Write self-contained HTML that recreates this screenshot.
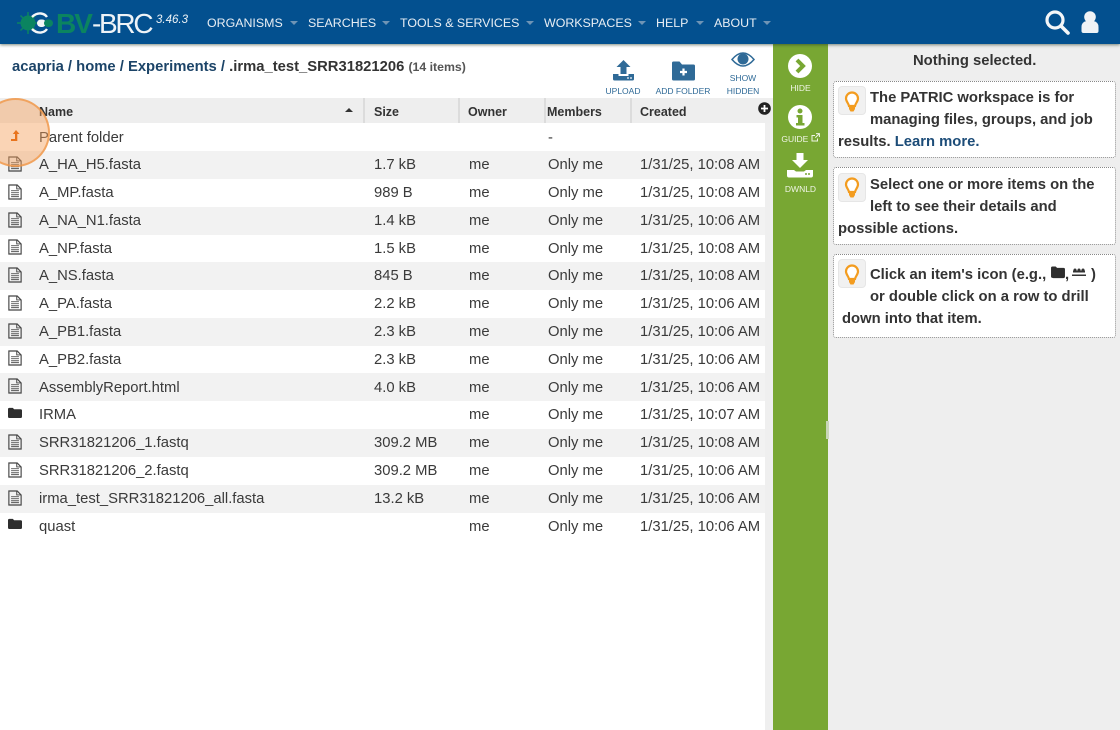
<!DOCTYPE html>
<html><head><meta charset="utf-8"><style>
html,body{margin:0;padding:0;width:1120px;height:730px;overflow:hidden;background:#fff}
body{font-family:"Liberation Sans",sans-serif;position:relative;color:#333}
.a{position:absolute;white-space:nowrap}
#top{position:absolute;left:0;top:0;width:1120px;height:44px;background:#03508f;box-shadow:0 1px 3px rgba(40,60,40,.6);z-index:3}
.nav{position:absolute;top:15px;font-size:12.4px;line-height:16px;color:#e8eef4;white-space:nowrap}
.car{position:absolute;top:21px;width:0;height:0;border:4px solid transparent;border-top:4px solid #6f94b5;border-bottom:0}
.row{position:absolute;left:0;width:765px;height:28px;font-size:14.8px;line-height:28px;color:#3a3a3a}
.row span{position:absolute;top:0;white-space:nowrap}
.row.d span{top:1px}
.row svg{position:absolute;left:8px;top:5px}
.s{background:#f2f2f2}
.h{position:absolute;top:104px;font-size:12.5px;font-weight:bold;line-height:16px;color:#333}
.sep{position:absolute;top:98px;width:2px;height:25px;background:#dcdcdc}
.tb{position:absolute;font-size:8.5px;line-height:13px;color:#2f6a97;text-align:center;white-space:nowrap}
.gl{position:absolute;font-size:8.5px;line-height:12px;color:#f0f5e6;text-align:center;width:55px;left:773px}
.card{position:absolute;left:833px;width:283px;background:#fff;border:1px dotted #888;box-sizing:border-box;border-radius:3px}
.t{position:absolute;font-size:14.8px;font-weight:bold;line-height:22px;color:#333;white-space:nowrap}
.bulb{position:absolute;left:838px;width:28px;height:29px;background:#f1f1f1;border:1px solid #e6e6e6;border-radius:4px;box-sizing:border-box}
</style></head><body>
<svg width="0" height="0" style="position:absolute"><defs>
<symbol id="doc" viewBox="0 0 16 18"><path d="M1 1h9.500l4.500 4.500v11.500h-14z" fill="none" stroke="#444" stroke-width="1.300"/><path d="M10 1v4.500h5" fill="none" stroke="#444" stroke-width="1.100"/><path d="M3.500 7.500h9M3.500 9.800h9M3.500 12.100h9M3.500 14.300h9" stroke="#555" stroke-width="1.100"/></symbol>
<symbol id="fold" viewBox="0 0 16 18"><path d="M0 3.500q0-1.500 1.500-1.500h4l1.500 1.500h7.500q1.500 0 1.500 1.500v7q0 1.500-1.500 1.500h-13q-1.500 0-1.500-1.500z" fill="#2e2e2e"/></symbol>
<symbol id="bulb" viewBox="0 0 16 24"><path d="M8 2.500a6 6 0 0 0-6 6c0 3 2.500 4.500 3 7.500h6c.5-3 3-4.500 3-7.500a6 6 0 0 0-6-6z" fill="#fff" stroke="#f39c1f" stroke-width="2.200"/><path d="M5 16.500h6v2.500l-1.500 2.500h-3l-1.500-2.500z" fill="#f39c1f"/></symbol>
</defs></svg>

<div id="top">
<div class="a" style="left:56px;top:9px;font-size:28px;line-height:30px;letter-spacing:-2px;color:#0b8460;font-weight:bold">BV</div>
<div class="a" style="left:92px;top:9px;font-size:28px;line-height:30px;letter-spacing:-2.300px;color:#eef3f7">-BRC</div>
<svg class="a" style="left:14px;top:9px" width="45" height="28" viewBox="0 0 45 28">
<circle cx="14" cy="14" r="7.500" fill="#0b8460"/><path d="M14 3v22M3 14h22M6.500 6.500l15 15M21.500 6.500l-15 15" stroke="#0b8460" stroke-width="1.500"/>
<path d="M18 8q4-4 9-3.500 4 .5 6 3.500M18 20q4 4 9 3.500 4-.5 6-3.500" fill="none" stroke="#f3f6f8" stroke-width="2.400"/>
<rect x="23" y="10.500" width="9" height="7.500" rx="3.700" fill="#f3f6f8"/><rect x="30" y="10.500" width="9" height="7.500" rx="3.700" fill="#0b8460"/>
</svg>
<div class="a" style="left:156px;top:13px;font-size:11.500px;line-height:14px;font-style:italic;color:#eef3f7">3.46.3</div>
<div class="nav" style="left:207px">ORGANISMS</div><div class="car" style="left:290px"></div>
<div class="nav" style="left:308px">SEARCHES</div><div class="car" style="left:382px"></div>
<div class="nav" style="left:400px">TOOLS &amp; SERVICES</div><div class="car" style="left:526px"></div>
<div class="nav" style="left:544px">WORKSPACES</div><div class="car" style="left:638px"></div>
<div class="nav" style="left:656px">HELP</div><div class="car" style="left:696px"></div>
<div class="nav" style="left:714px">ABOUT</div><div class="car" style="left:763px"></div>
<svg class="a" style="left:1044px;top:9px" width="26" height="26" viewBox="0 0 26 26"><circle cx="11" cy="11" r="8" fill="none" stroke="#f4f6f8" stroke-width="3.200"/><path d="M17 17l7 7" stroke="#f4f6f8" stroke-width="3.600" stroke-linecap="round"/></svg>
<svg class="a" style="left:1080px;top:10px" width="20" height="24" viewBox="0 0 20 24"><circle cx="10" cy="7" r="5.800" fill="#f0f3f6"/><path d="M1.500 21v-4q0-5 5-6h7q5 1 5 6v4q0 2-2 2h-13q-2 0-2-2z" fill="#f0f3f6"/></svg>
</div>

<div class="a" style="left:12px;top:58px;font-size:14.8px;line-height:18px;font-weight:bold;color:#1c4468">acapria / home / Experiments / <span style="color:#333">.irma_test_SRR31821206</span> <span style="font-size:12.300px;color:#555">(14 items)</span></div>

<svg class="a" style="left:612px;top:59px" width="23" height="23" viewBox="0 0 23 23"><path d="M11.500 1l7 7h-4v7h-6v-7h-4z" fill="#2f6a97"/><path d="M1 15h5.500v2h10v-2h5.500v5q0 1.500-1.500 1.500h-18q-1.500 0-1.500-1.500z" fill="#2f6a97"/><circle cx="16" cy="19" r=".9" fill="#fff"/><circle cx="19" cy="19" r=".9" fill="#fff"/></svg>
<div class="tb" style="left:603px;top:85px;width:40px">UPLOAD</div>
<svg class="a" style="left:672px;top:61px" width="23" height="20" viewBox="0 0 23 20"><path d="M0 2q0-1.500 1.500-1.500h6l2.500 3h11.500q1.500 0 1.500 1.500v13q0 1.500-1.500 1.500h-20q-1.500 0-1.500-1.500z" fill="#2f6a97"/><path d="M11.500 7.500v7M8 11h7" stroke="#fff" stroke-width="2.200"/></svg>
<div class="tb" style="left:653px;top:85px;width:60px">ADD FOLDER</div>
<svg class="a" style="left:731px;top:51px" width="24" height="17" viewBox="0 0 24 17"><path d="M1 8.500q11-13 22 0-11 13-22 0z" fill="none" stroke="#2f6a97" stroke-width="1.500"/><circle cx="12" cy="8" r="5.500" fill="#2f6a97"/></svg>
<div class="tb" style="left:723px;top:72px;width:40px">SHOW<br>HIDDEN</div>

<div class="a" style="left:0;top:98px;width:773px;height:25px;background:#eee"></div>
<div class="a" style="left:765px;top:123px;width:8px;height:607px;background:#efefef"></div>
<div class="sep" style="left:363px"></div><div class="sep" style="left:458px"></div><div class="sep" style="left:544px"></div><div class="sep" style="left:630px"></div>
<div class="h" style="left:39px">Name</div>
<div class="a" style="left:345px;top:108px;width:0;height:0;border:4px solid transparent;border-bottom:4px solid #333;border-top:0"></div>
<div class="h" style="left:374px">Size</div><div class="h" style="left:468px">Owner</div><div class="h" style="left:547px">Members</div><div class="h" style="left:640px">Created</div>
<svg class="a" style="left:758px;top:102px" width="13" height="13" viewBox="0 0 13 13"><circle cx="6.500" cy="6.500" r="6.300" fill="#222"/><path d="M6.500 3v7M3 6.500h7" stroke="#fff" stroke-width="1.800"/></svg>

<div class="row d" style="top:123px"><span style="left:39px">Parent folder</span><span style="left:548px">-</span></div>
<div class="row s" style="top:151px"><svg width="14" height="16"><use href="#doc"/></svg><span style="left:39px">A_HA_H5.fasta</span><span style="left:374px">1.7 kB</span><span style="left:469px">me</span><span style="left:548px">Only me</span><span style="left:640px">1/31/25, 10:08 AM</span></div>
<div class="row" style="top:179px"><svg width="14" height="16"><use href="#doc"/></svg><span style="left:39px">A_MP.fasta</span><span style="left:374px">989 B</span><span style="left:469px">me</span><span style="left:548px">Only me</span><span style="left:640px">1/31/25, 10:08 AM</span></div>
<div class="row s" style="top:207px"><svg width="14" height="16"><use href="#doc"/></svg><span style="left:39px">A_NA_N1.fasta</span><span style="left:374px">1.4 kB</span><span style="left:469px">me</span><span style="left:548px">Only me</span><span style="left:640px">1/31/25, 10:06 AM</span></div>
<div class="row d" style="top:234px"><svg width="14" height="16"><use href="#doc"/></svg><span style="left:39px">A_NP.fasta</span><span style="left:374px">1.5 kB</span><span style="left:469px">me</span><span style="left:548px">Only me</span><span style="left:640px">1/31/25, 10:08 AM</span></div>
<div class="row s" style="top:262px"><svg width="14" height="16"><use href="#doc"/></svg><span style="left:39px">A_NS.fasta</span><span style="left:374px">845 B</span><span style="left:469px">me</span><span style="left:548px">Only me</span><span style="left:640px">1/31/25, 10:08 AM</span></div>
<div class="row" style="top:290px"><svg width="14" height="16"><use href="#doc"/></svg><span style="left:39px">A_PA.fasta</span><span style="left:374px">2.2 kB</span><span style="left:469px">me</span><span style="left:548px">Only me</span><span style="left:640px">1/31/25, 10:06 AM</span></div>
<div class="row s" style="top:318px"><svg width="14" height="16"><use href="#doc"/></svg><span style="left:39px">A_PB1.fasta</span><span style="left:374px">2.3 kB</span><span style="left:469px">me</span><span style="left:548px">Only me</span><span style="left:640px">1/31/25, 10:06 AM</span></div>
<div class="row d" style="top:345px"><svg width="14" height="16"><use href="#doc"/></svg><span style="left:39px">A_PB2.fasta</span><span style="left:374px">2.3 kB</span><span style="left:469px">me</span><span style="left:548px">Only me</span><span style="left:640px">1/31/25, 10:06 AM</span></div>
<div class="row s d" style="top:373px"><svg width="14" height="16"><use href="#doc"/></svg><span style="left:39px">AssemblyReport.html</span><span style="left:374px">4.0 kB</span><span style="left:469px">me</span><span style="left:548px">Only me</span><span style="left:640px">1/31/25, 10:06 AM</span></div>
<div class="row" style="top:401px"><svg width="14" height="16"><use href="#fold"/></svg><span style="left:39px">IRMA</span><span style="left:469px">me</span><span style="left:548px">Only me</span><span style="left:640px">1/31/25, 10:07 AM</span></div>
<div class="row s" style="top:429px"><svg width="14" height="16"><use href="#doc"/></svg><span style="left:39px">SRR31821206_1.fastq</span><span style="left:374px">309.2 MB</span><span style="left:469px">me</span><span style="left:548px">Only me</span><span style="left:640px">1/31/25, 10:08 AM</span></div>
<div class="row" style="top:457px"><svg width="14" height="16"><use href="#doc"/></svg><span style="left:39px">SRR31821206_2.fastq</span><span style="left:374px">309.2 MB</span><span style="left:469px">me</span><span style="left:548px">Only me</span><span style="left:640px">1/31/25, 10:06 AM</span></div>
<div class="row s" style="top:485px"><svg width="14" height="16"><use href="#doc"/></svg><span style="left:39px">irma_test_SRR31821206_all.fasta</span><span style="left:374px">13.2 kB</span><span style="left:469px">me</span><span style="left:548px">Only me</span><span style="left:640px">1/31/25, 10:06 AM</span></div>
<div class="row d" style="top:512px"><svg width="14" height="16"><use href="#fold"/></svg><span style="left:39px">quast</span><span style="left:469px">me</span><span style="left:548px">Only me</span><span style="left:640px">1/31/25, 10:06 AM</span></div>

<svg class="a" style="left:9px;top:129px;z-index:2" width="12" height="14" viewBox="0 0 12 14"><path d="M7 1l3.500 4h-2.200v7h-6.300v-2h4v-5h-2.200z" fill="#e8741e"/></svg>
<div class="a" style="left:-19px;top:98px;width:69px;height:69px;border-radius:50%;background:rgba(245,160,90,.45);border:2px solid rgba(240,150,70,.75);box-sizing:border-box;z-index:1"></div>

<div class="a" style="left:773px;top:44px;width:55px;height:686px;background:#78a733"></div>
<svg class="a" style="left:788px;top:54px" width="24" height="24" viewBox="0 0 24 24"><circle cx="12" cy="12" r="12" fill="#fff"/><path d="M9 6l6 6-6 6" fill="none" stroke="#78a733" stroke-width="4"/></svg>
<div class="gl" style="top:82px">HIDE</div>
<svg class="a" style="left:788px;top:105px" width="24" height="24" viewBox="0 0 24 24"><circle cx="12" cy="12" r="12" fill="#fff"/><circle cx="12" cy="6" r="2.500" fill="#78a733"/><path d="M8.500 10h6v8h2v2.500h-8.500v-2.500h2v-5.500h-1.500z" fill="#78a733"/></svg>
<div class="gl" style="top:133px">GUIDE <svg width="9" height="9" viewBox="0 0 9 9" style="vertical-align:0"><path d="M6.500 5.500v2.500h-5.500v-5.500h3M5 .6h3.400v3.400M8.300.7l-4 4" fill="none" stroke="#f0f5e6" stroke-width="1"/></svg></div>
<svg class="a" style="left:787px;top:153px" width="26" height="25" viewBox="0 0 26 25"><path d="M9.500 0h7v7h4.500l-8 8-8-8h4.500z" fill="#fff"/><path d="M0 17h7l2 1.500h8l2-1.500h7v5.500q0 2-2 2h-22q-2 0-2-2z" fill="#fff"/><circle cx="19" cy="21" r="1" fill="#78a733"/><circle cx="22" cy="21" r="1" fill="#78a733"/></svg>
<div class="gl" style="top:183px">DWNLD</div>

<div class="a" style="left:828px;top:44px;width:292px;height:686px;background:#eee"></div>
<div class="a" style="left:826px;top:421px;width:3px;height:18px;background:#c9d6b8"></div>
<div class="t" style="left:913px;top:50px">Nothing selected.</div>

<div class="card" style="top:81px;height:77px"></div>
<div class="bulb" style="top:86px"></div><svg class="a" style="left:844px;top:90px" width="16" height="24" viewBox="0 0 16 24"><use href="#bulb"/></svg>
<div class="t" style="left:870px;top:87px">The PATRIC workspace is for</div>
<div class="t" style="left:870px;top:109px">managing files, groups, and job</div>
<div class="t" style="left:838px;top:131px">results. <span style="color:#1c4c78">Learn more.</span></div>

<div class="card" style="top:167px;height:78px"></div>
<div class="bulb" style="top:173px"></div><svg class="a" style="left:844px;top:176px" width="16" height="24" viewBox="0 0 16 24"><use href="#bulb"/></svg>
<div class="t" style="left:870px;top:174px">Select one or more items on the</div>
<div class="t" style="left:870px;top:196px">left to see their details and</div>
<div class="t" style="left:838px;top:218px">possible actions.</div>

<div class="card" style="top:254px;height:84px"></div>
<div class="bulb" style="top:259px"></div><svg class="a" style="left:844px;top:263px" width="16" height="24" viewBox="0 0 16 24"><use href="#bulb"/></svg>
<div class="t" style="left:870px;top:264px">Click an item's icon (e.g.,</div>
<svg class="a" style="left:1051px;top:266px" width="14" height="13" viewBox="0 0 15 14"><path d="M0 2q0-1.500 1.500-1.500h3.500l1.500 1.500h7q1.500 0 1.500 1.500v8q0 1.500-1.500 1.500h-11q-2.500 0-2.500-1.500z" fill="#2e2e2e"/></svg>
<div class="t" style="left:1065px;top:264px">,</div>
<svg class="a" style="left:1072px;top:268px" width="14" height="10" viewBox="0 0 14 10"><circle cx="3" cy="2" r="1.500" fill="#333"/><circle cx="7" cy="2" r="1.500" fill="#333"/><circle cx="11" cy="2" r="1.500" fill="#333"/><rect x="1" y="2.500" width="12" height="2" fill="#333"/><rect x="0" y="6.500" width="14" height="1.500" fill="#333"/></svg>
<div class="t" style="left:1091px;top:264px">)</div>
<div class="t" style="left:870px;top:286px">or double click on a row to drill</div>
<div class="t" style="left:842px;top:308px">down into that item.</div>
</body></html>
